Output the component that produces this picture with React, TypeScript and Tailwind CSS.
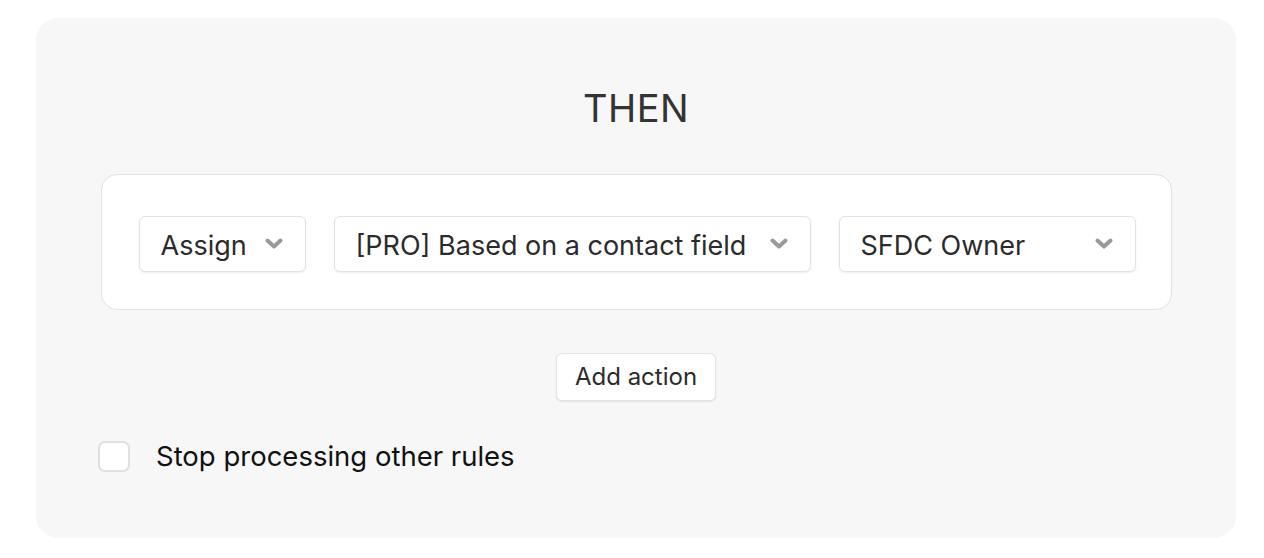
const Chevron = () => (
  <svg width="18" height="12" viewBox="0 0 18 12" className="shrink-0">
    <path d="M2.5 2.5 L9 8.5 L15.5 2.5" fill="none" stroke="#9a9a9a" strokeWidth="4" strokeLinecap="round" strokeLinejoin="round" />
  </svg>
)

const Select = ({ label, width }: { label: string; width: string }) => (
  <div className={`${width} h-[56px] flex items-center justify-between pl-[21px] pr-[22px] bg-white border border-[#e3e3e3] rounded-[6px] shadow-[0_1px_2px_rgba(0,0,0,0.08)]`}>
    <span className="pt-[4px] text-[27px] text-[#2b2b2b] whitespace-nowrap">{label}</span>
    <Chevron />
  </div>
)

export default function App() {
  return (
    <div className="w-[1264px] h-[558px] bg-white pt-[18px] px-[36px] font-['Inter','Noto_Sans',sans-serif]">
      <div className="w-[1200px] h-[520px] bg-[#f7f7f7] rounded-[22px] flex flex-col items-center pt-[67px]">
        <h2 className="text-[38px] leading-[46px] text-[#333333] tracking-[0.5px]">THEN</h2>

        <div className="mt-[43px] w-[1071px] h-[136px] bg-white border border-[#e2e2e2] rounded-[16px] flex items-start gap-[28px] pl-[37px] pt-[41px]">
          <Select label="Assign" width="w-[167px]" />
          <Select label="[PRO] Based on a contact field" width="w-[477px]" />
          <Select label="SFDC Owner" width="w-[297px]" />
        </div>

        <button className="mt-[43px] h-[48px] px-[18px] bg-white border border-[#e3e3e3] rounded-[6px] shadow-[0_1px_2px_rgba(0,0,0,0.08)] text-[24px] text-[#2b2b2b]">
          Add action
        </button>

        <label className="mt-[35px] self-start ml-[62px] flex items-center gap-[26px]">
          <span className="w-[32px] h-[31px] bg-white border-2 border-[#e0e0e0] rounded-[7px]" />
          <span className="text-[27.5px] text-[#111111]">Stop processing other rules</span>
        </label>
      </div>
    </div>
  )
}
